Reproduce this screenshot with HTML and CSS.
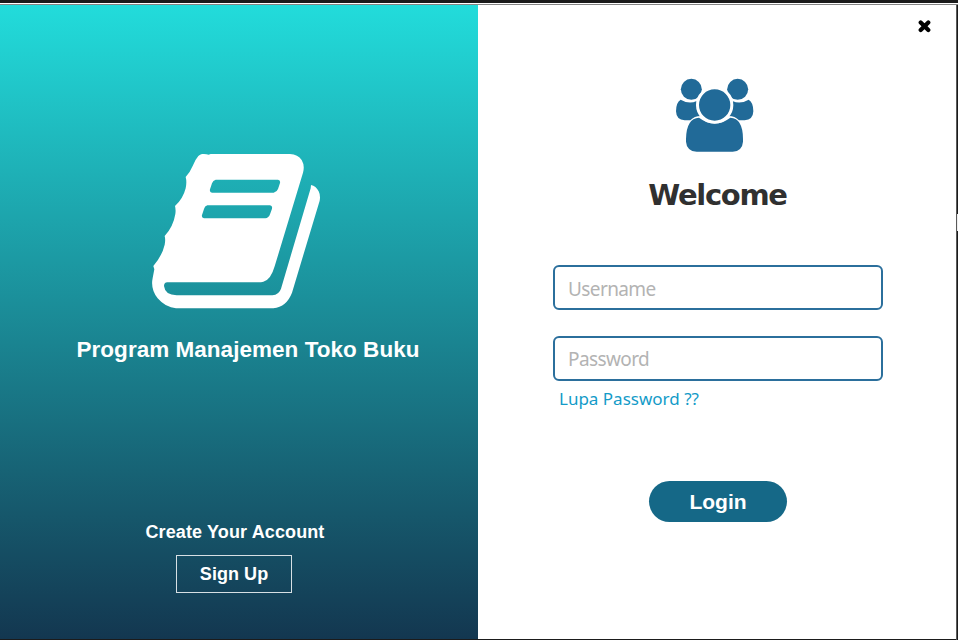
FILE: index.html
```html
<!DOCTYPE html>
<html lang="id">
<head>
<meta charset="utf-8">
<title>Program Manajemen Toko Buku</title>
<link rel="stylesheet" href="styles.css">
</head>
<body>
<div class="window">
  <section class="brand">
    <svg class="book" viewBox="0 0 600 540" aria-hidden="true">
      <path fill="#fff" fill-rule="evenodd" d="M186 42Q198 41 206 44L212 42H450Q474 43 485 60Q495 77 489 98L404 379Q392 421 370 425Q365 427 352 427H82Q72 428 72 438Q75 465 110 466H397Q417 464 423 446L512 145L513 135Q528 138 536 154Q542 166 539 182L456 458Q440 500 400 505H108Q77 503 53 475Q31 447 38 414L43 388L40 378Q66 348 74 314Q77 299 74 288Q100 260 106 222Q108 210 105 198Q129 177 137 145Q141 126 137 111Q149 99 158 78Q166 58 175 48Q180 43 186 42ZM227 119H414Q422 120 420 129L414 147Q411 156 401 158H216Q208 157 210 148L216 130Q219 121 227 119ZM202 196H390Q398 197 396 206L390 223Q386 234 376 235H192Q184 234 186 225L192 207Q194 198 202 196Z"/>
    </svg>
    <h1 class="brand-title">Program Manajemen Toko Buku</h1>
    <p class="create">Create Your Account</p>
    <button class="signup" type="button">Sign Up</button>
  </section>
  <section class="login">
    <button class="close" type="button" aria-label="Close">
      <svg viewBox="0 0 14 14"><path d="M3.7 3.4L11.3 11M11.3 3.4L3.7 11" stroke="#000" stroke-width="4.2" stroke-linecap="round"/></svg>
    </button>
    <svg class="users" viewBox="0 0 330 300" aria-hidden="true">
      <g fill="#216a98">
        <path d="M62 104Q87 119 110 108Q108 139 125 153Q104 152 91 166H74Q49 165 48 139Q48 112 62 104Z"/>
        <path d="M266 104Q241 119 217 108Q220 139 203 153Q224 152 237 166H254Q279 165 280 139Q280 112 266 104Z"/>
        <circle cx="94" cy="73" r="31.5"/>
        <circle cx="233" cy="73" r="31.5"/>
        <path d="M117 158Q164 193 211 158Q249 160 249 222V230Q247 258 218 260H110Q80 258 78 230V222Q79 160 117 158Z"/>
        <circle cx="164" cy="120" r="51.5" stroke="#fff" stroke-width="9"/>
      </g>
    </svg>
    <h2 class="welcome">Welcome</h2>
    <input class="field username" type="text" placeholder="Username">
    <input class="field" type="password" placeholder="Password">
    <a class="forgot">Lupa Password ??</a>
    <button class="submit" type="button">Login</button>
  </section>
  <div class="notch"></div>
</div>
</body>
</html>
```
FILE: styles.css
```css
* { box-sizing: border-box; }
body { margin: 0; overflow: hidden; }
h1, h2, p { margin: 0; }
button { padding: 0; font-family: "Liberation Sans", Arial, sans-serif; font-weight: bold; color: #fff; }

.window {
  position: relative;
  display: flex;
  width: 958px;
  height: 640px;
  padding: 5px 2px 1px 0;
  background:
    linear-gradient(#1b1b1b 3px, #fff 3px, #fff 4px, #858585 4px, #858585 5px, transparent 5px) 0 0 / 100% 5px no-repeat,
    linear-gradient(90deg, #5a5a5a 1px, #1b1b1b 1px) 956px 0 / 2px 100% no-repeat,
    #1b1b1b;
}
.notch { position: absolute; right: 0; top: 214px; width: 1px; height: 17px; background: #eee; }

.brand {
  display: flex;
  flex-direction: column;
  align-items: center;
  width: 478px;
  background: linear-gradient(#22dcdb, #133750);
  color: #fff;
  font-family: "Liberation Sans", Arial, sans-serif;
}
.book { width: 200px; height: 180px; margin: 135px 0 0 2px; flex: none; }
.brand-title { margin: 17px 0 0 18px; font-size: 22.5px; line-height: 26px; letter-spacing: 0.03px; white-space: nowrap; }
.create { margin: 159px 8px 0 0; font-size: 18px; line-height: 20px; font-weight: bold; letter-spacing: 0.12px; }
.signup {
  width: 116px;
  height: 38px;
  margin: 13px 10px 0 0;
  border: 1px solid #d7e0e4;
  background: none;
  font-size: 18px;
  letter-spacing: 0.05px;
}

.login {
  display: flex;
  flex-direction: column;
  align-items: center;
  width: 478px;
  padding-left: 2px;
  background: #fff;
  font-family: "Noto Sans", sans-serif;
}
.close { align-self: flex-end; width: 14px; height: 14px; margin: 14px 25px 0 0; border: 0; background: none; }
.close svg { display: block; width: 14px; height: 14px; fill: none; }
.users { width: 110px; height: 100px; margin: 32px 6px 0 0; flex: none; }
.welcome { margin: 10px 0 0 -1px; color: #303030; font: bold 29px/40px "DejaVu Sans", sans-serif; letter-spacing: -1.3px; }
.field {
  width: 330px;
  height: 45px;
  margin-top: 50px;
  padding: 0 13px;
  border: 2px solid #2b6f9c;
  border-radius: 6px;
  background: #fff;
  font: 19px "Noto Sans", sans-serif;
  letter-spacing: -0.6px;
}
.username { padding-top: 2px; }
.field + .field { margin-top: 26px; }
.field::placeholder { color: #b3b3b3; opacity: 1; }
.forgot { align-self: flex-start; margin: 5px 0 0 79px; color: #139bc8; font-size: 17px; line-height: 26px; }
.submit { width: 138px; height: 41px; margin-top: 69px; border: 0; border-radius: 21px; background: #156887; font-size: 21px; }
```
